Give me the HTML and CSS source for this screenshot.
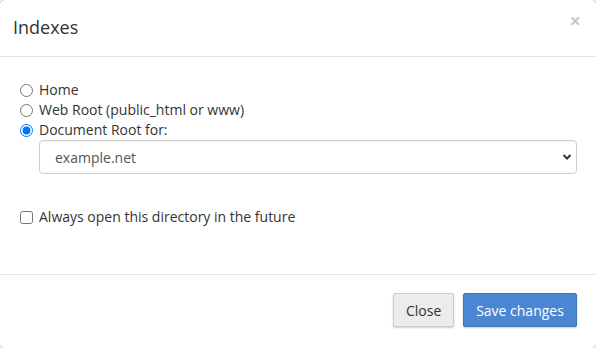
FILE: index.html
```html
<!DOCTYPE html>
<html lang="en">
<head>
    <meta charset="UTF-8">
    <title>Indexes</title>
    <link rel="stylesheet" href="styles.css">
</head>
<body>

    <div class="modal">
        <div class="modal-header">
            <h4>Indexes</h4>
            <span class="close-x">&times;</span>
        </div>

        <div class="modal-body">
            <label class="option"><input type="radio" name="dir"> Home</label>
            <label class="option"><input type="radio" name="dir"> Web Root (public_html or www)</label>
            <label class="option"><input type="radio" name="dir" checked> Document Root for:</label>
            <div class="select-wrap">
                <div class="select">
                    <span>example.net</span>
                    <svg width="10" height="8" viewBox="0 0 10 8"><path d="M1.5 2 L5 5.5 L8.5 2" fill="none" stroke="#333" stroke-width="2"/></svg>
                </div>
            </div>

            <label class="option remember"><input type="checkbox"> Always open this directory in the future</label>
        </div>

        <div class="modal-footer">
            <button class="btn btn-default">Close</button>
            <button class="btn btn-primary">Save changes</button>
        </div>
    </div>

</body>
</html>
```

FILE: styles.css
```css
body {
    margin: 0;
    background: #fff;
    font-family: "Open Sans", "Liberation Sans", sans-serif;
    font-size: 14px;
    color: #333;
    overflow: hidden;
}
.modal {
    width: 598px;
    height: 350px;
    margin: -1px;
    border: 1px solid rgba(0,0,0,0.2);
    border-radius: 6px;
    box-sizing: border-box;
    display: flex;
    flex-direction: column;
}
.modal-header {
    height: 57px;
    box-sizing: border-box;
    border-bottom: 1px solid #e5e5e5;
    display: flex;
    align-items: center;
    justify-content: space-between;
    padding: 0 15px 0 13px;
}
.modal-header h4 {
    margin: 0;
    font-size: 18px;
    font-weight: normal;
    color: #333;
    padding-bottom: 3px;
}
.close-x {
    font-size: 20px;
    font-weight: bold;
    color: #c8c8c8;
    line-height: 1;
    margin-top: -14px;
}
.modal-body {
    height: 218px;
    box-sizing: border-box;
    border-bottom: 1px solid #e5e5e5;
    padding: 23px 19px 0 19px;
}
.option {
    display: flex;
    align-items: center;
    height: 20px;
    line-height: 20px;
}
.option input {
    margin: 0 6px 0 1px;
    width: 13px;
    height: 13px;
}
.select-wrap {
    padding: 0 0 0 20px;
}
.select {
    height: 34px;
    box-sizing: border-box;
    border: 1px solid #ccc;
    border-radius: 4px;
    display: flex;
    align-items: center;
    justify-content: space-between;
    padding: 0 4px 0 15px;
    color: #555;
    box-shadow: inset 0 1px 1px rgba(0,0,0,0.05);
}
.remember {
    margin-top: 33px;
}
.remember input {
    margin-right: 6px;
}
.modal-footer {
    display: flex;
    justify-content: flex-end;
    gap: 9px;
    padding: 18px 19px 0 0;
}
.btn {
    font-family: "Open Sans", "Liberation Sans", sans-serif;
    font-size: 14px;
    height: 34px;
    padding: 0 12px;
    border-radius: 2px;
    border: 1px solid #ccc;
    cursor: pointer;
    box-shadow: 0 1px 2px rgba(0,0,0,0.2);
}
.btn-default {
    background: #ececec;
    color: #333;
    width: 61px;
}
.btn-primary {
    background: #4a86d2;
    border-color: #3f76bd;
    color: #fff;
    width: 114px;
}
```
